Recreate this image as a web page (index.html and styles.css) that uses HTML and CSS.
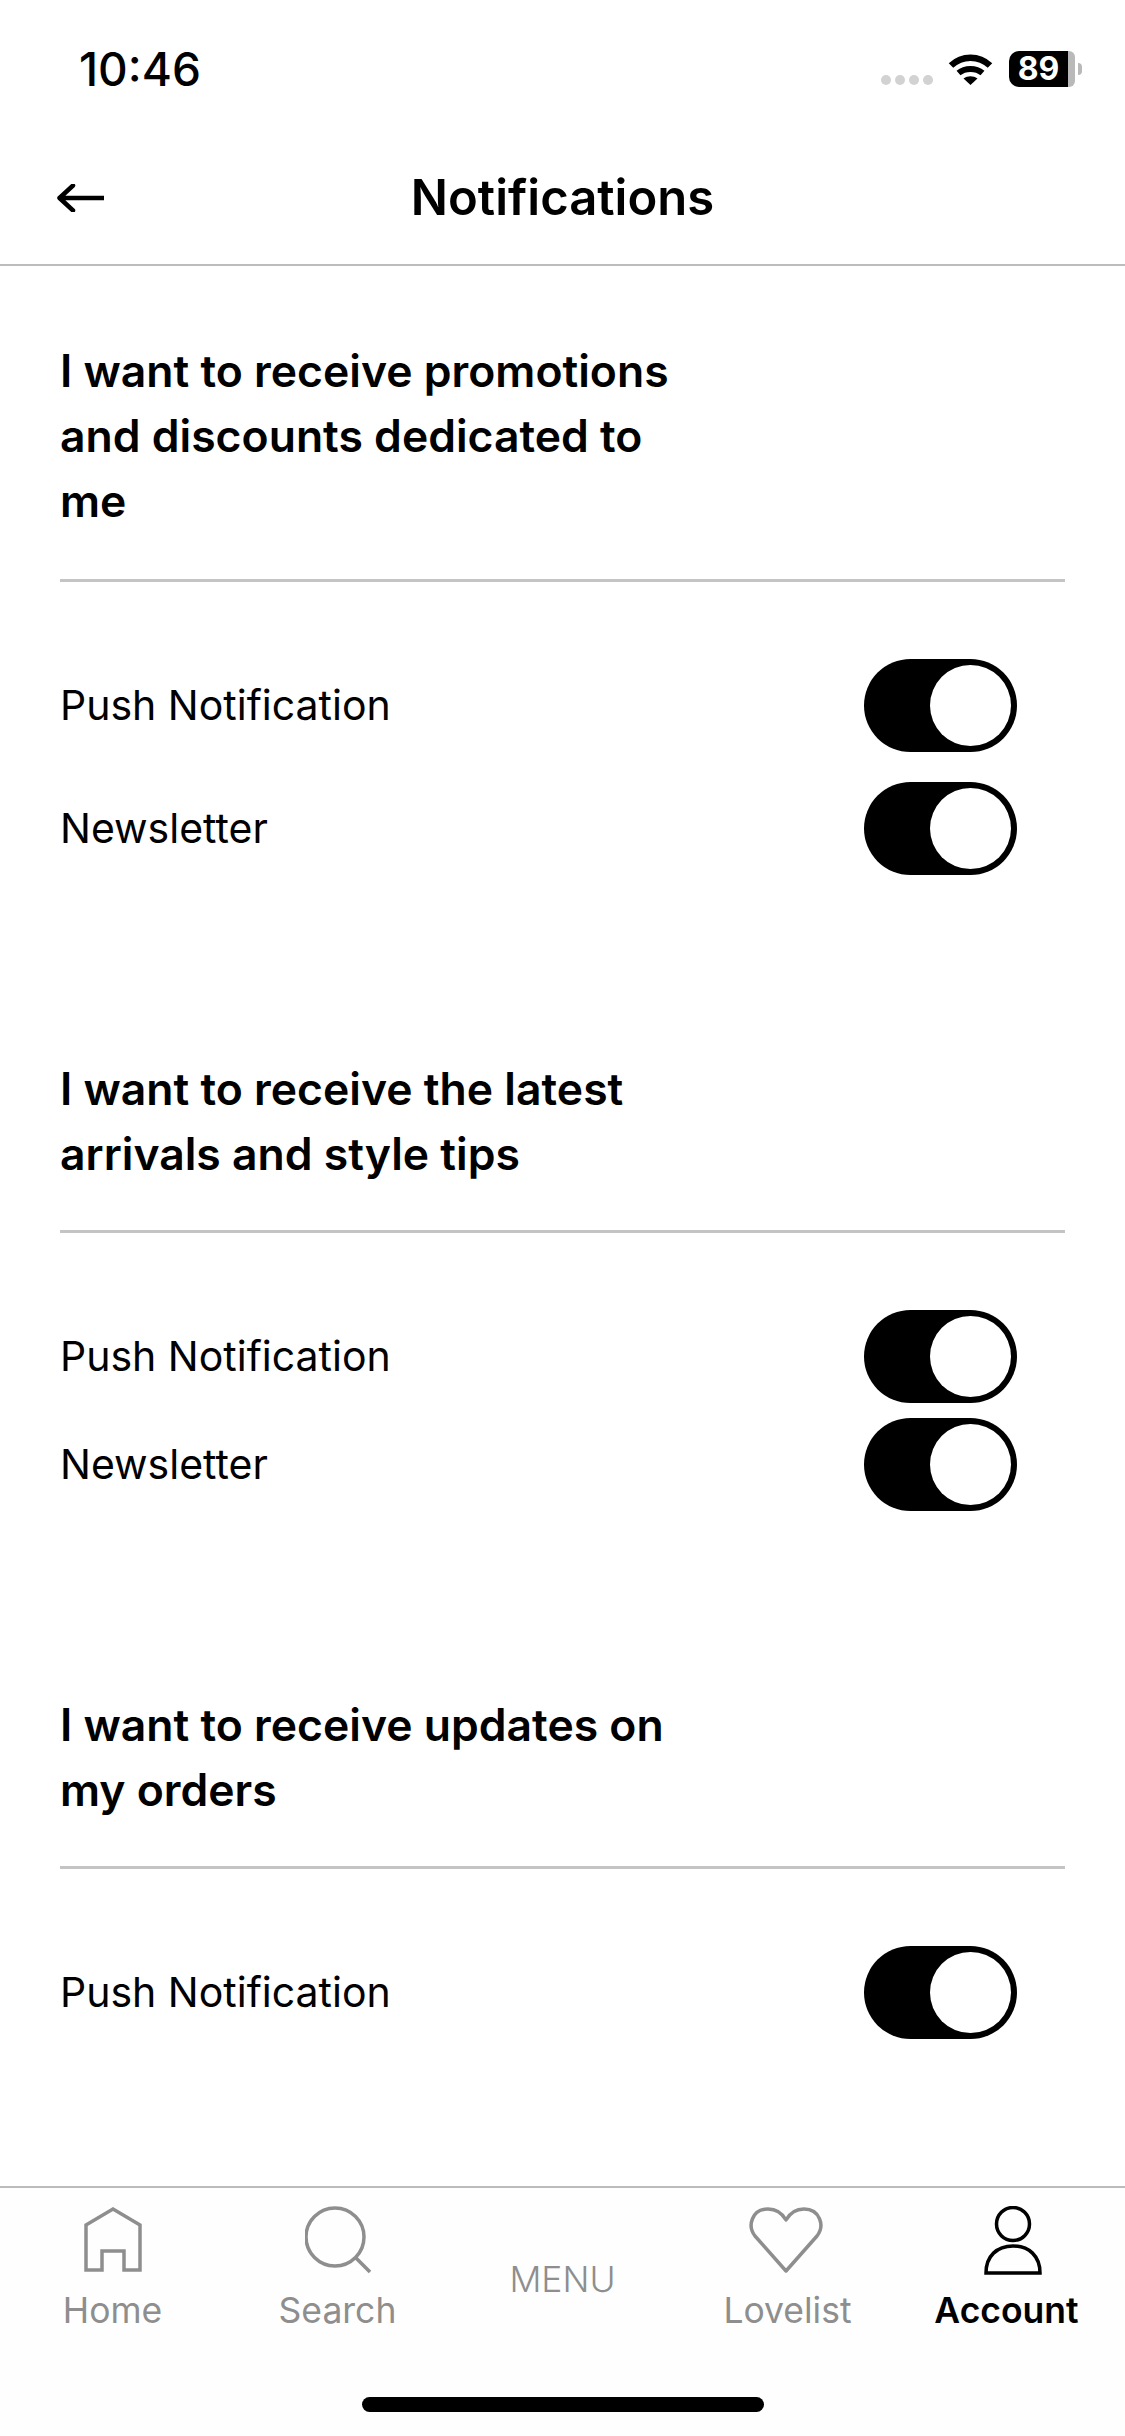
FILE: index.html
```html
<!DOCTYPE html>
<html>
<head>
  <title>Notifications</title>
  <link rel="stylesheet" href="styles.css">
</head>
<body>
  <div class="status-bar">
    <span class="status-time">10:46</span>
    <div class="status-icons">
      <div class="signal-dots"><i></i><i></i><i></i><i></i></div>
      <svg class="wifi-icon" viewBox="0 0 45 33" xmlns="http://www.w3.org/2000/svg">
        <path d="M3 13.5C14 3 31 3 42 13.5" fill="none" stroke="#000" stroke-width="6.5"/>
        <path d="M10.5 21C17 15.5 28 15.5 34.5 21" fill="none" stroke="#000" stroke-width="6"/>
        <path d="M15.5 26.5C20 23.5 25 23.5 29.5 26.5L22.5 33Z" fill="#000"/>
      </svg>
      <div class="battery">
        <div class="battery-body"><span class="battery-level">89</span></div>
        <div class="battery-rest"></div>
        <div class="battery-nub"></div>
      </div>
    </div>
  </div>

  <header class="page-header">
    <svg class="back-icon" viewBox="0 0 47 28" xmlns="http://www.w3.org/2000/svg">
      <path d="M47 14H3M16 1.500L2.500 14 16 26.500" fill="none" stroke="#000" stroke-width="4.500" stroke-linecap="round" stroke-linejoin="round"/>
    </svg>
    <h1 class="page-title">Notifications</h1>
  </header>

  <main class="content">
    <section class="group">
      <h2 class="group-title">I want to receive promotions and discounts dedicated to me</h2>
      <div class="option-list option-list--wide">
        <div class="option">
          <span class="option-label">Push Notification</span>
          <span class="toggle"><span class="toggle-knob"></span></span>
        </div>
        <div class="option">
          <span class="option-label">Newsletter</span>
          <span class="toggle"><span class="toggle-knob"></span></span>
        </div>
      </div>
    </section>

    <section class="group">
      <h2 class="group-title">I want to receive the latest arrivals and style tips</h2>
      <div class="option-list">
        <div class="option">
          <span class="option-label">Push Notification</span>
          <span class="toggle"><span class="toggle-knob"></span></span>
        </div>
        <div class="option">
          <span class="option-label">Newsletter</span>
          <span class="toggle"><span class="toggle-knob"></span></span>
        </div>
      </div>
    </section>

    <section class="group">
      <h2 class="group-title">I want to receive updates on my orders</h2>
      <div class="option-list">
        <div class="option">
          <span class="option-label">Push Notification</span>
          <span class="toggle"><span class="toggle-knob"></span></span>
        </div>
      </div>
    </section>
  </main>

  <nav class="tab-bar">
    <div class="tabs">
      <a class="tab">
        <svg class="tab-icon" width="58" height="68" viewBox="0 0 58 68" xmlns="http://www.w3.org/2000/svg">
          <path d="M2 64V19L29 3 56 19V64H40V45H18V64Z" fill="none" stroke="#8e8e8e" stroke-width="3.500"/>
        </svg>
        <span class="tab-label">Home</span>
      </a>
      <a class="tab">
        <svg class="tab-icon" width="66" height="68" viewBox="0 0 66 68" xmlns="http://www.w3.org/2000/svg">
          <circle cx="30" cy="31" r="29" fill="none" stroke="#8e8e8e" stroke-width="3.500"/>
          <path d="M51 52L65 66" fill="none" stroke="#8e8e8e" stroke-width="3.500"/>
        </svg>
        <span class="tab-label">Search</span>
      </a>
      <a class="tab tab--text">
        <span class="tab-menu">MENU</span>
      </a>
      <a class="tab">
        <svg class="tab-icon tab-icon--heart" width="74" height="68" viewBox="0 0 74 68" xmlns="http://www.w3.org/2000/svg">
          <path d="M37 65L6 30C-2 20 3 3 19 3C28 3 33 7 37 14C41 7 46 3 55 3C71 3 76 20 68 30Z" fill="none" stroke="#8e8e8e" stroke-width="3.500" stroke-linejoin="round"/>
        </svg>
        <span class="tab-label">Lovelist</span>
      </a>
      <a class="tab tab--active">
        <svg class="tab-icon" width="58" height="70" viewBox="0 0 58 70" xmlns="http://www.w3.org/2000/svg">
          <ellipse cx="29" cy="18" rx="16.500" ry="16.500" fill="none" stroke="#000" stroke-width="3.500"/>
          <path d="M2 67C2 50 13 40 29 40C45 40 56 50 56 67Z" fill="none" stroke="#000" stroke-width="3.500"/>
        </svg>
        <span class="tab-label">Account</span>
      </a>
    </div>
    <div class="home-indicator"></div>
  </nav>
</body>
</html>
```

FILE: styles.css
```css
html,
body {
  margin: 0;
  padding: 0;
}

body {
  width: 1125px;
  height: 2436px;
  display: flex;
  flex-direction: column;
  overflow: hidden;
  background-color: #ffffff;
  color: #000000;
  font-family: Inter, "Liberation Sans", sans-serif;
}

/* status bar */
.status-bar {
  height: 132px;
  box-sizing: border-box;
  padding: 46px 43px 0 79px;
  display: flex;
  justify-content: space-between;
  align-items: flex-start;
}

.status-time {
  font-size: 46px;
  font-weight: 500;
  line-height: 46px;
}

.status-icons {
  display: flex;
  align-items: flex-start;
  padding-top: 5px;
}

.signal-dots {
  display: flex;
  gap: 4px;
  margin-top: 24px;
}

.signal-dots i {
  width: 10px;
  height: 10px;
  border-radius: 5px;
  background-color: #d2d2d2;
}

.wifi-icon {
  width: 45px;
  height: 33px;
  margin: 1px 16px 0 15px;
}

.battery {
  display: flex;
  align-items: center;
}

.battery-body {
  width: 59px;
  height: 36px;
  border-radius: 10px 0 0 10px;
  background-color: #000000;
  display: flex;
  align-items: center;
  justify-content: center;
}

.battery-level {
  color: #ffffff;
  font-size: 32px;
  font-weight: 700;
  line-height: 36px;
}

.battery-rest {
  width: 7px;
  height: 36px;
  border-radius: 0 6px 6px 0;
  background-color: #b9b9b9;
}

.battery-nub {
  width: 4px;
  height: 12px;
  margin-left: 3px;
  border-radius: 0 4px 4px 0;
  background-color: #b9b9b9;
}

/* page header */
.page-header {
  height: 134px;
  box-sizing: border-box;
  display: grid;
  grid-template-columns: 1fr auto 1fr;
  align-items: center;
  padding: 0 57px 0 57px;
  border-bottom: 2px solid #bcbcbc;
}

.back-icon {
  width: 47px;
  height: 28px;
}

.page-title {
  margin: 0;
  font-size: 49px;
  font-weight: 600;
  line-height: 60px;
}

/* notification groups */
.content {
  flex: 1;
  padding: 73px 60px 0;
  display: flex;
  flex-direction: column;
  gap: 182px;
}

.group-title {
  margin: 0;
  padding: 0 385px 43px 0;
  border-bottom: 3px solid #c4c4c4;
  font-size: 44.5px;
  font-weight: 600;
  line-height: 65px;
}

.group:first-child .group-title {
  padding-bottom: 45px;
}

.option-list {
  padding-top: 77px;
  display: flex;
  flex-direction: column;
  gap: 15px;
}

.option-list--wide {
  gap: 30px;
}

.option {
  display: flex;
  justify-content: space-between;
  align-items: center;
  padding-right: 48px;
}

.option-label {
  padding-bottom: 2px;
  font-size: 41px;
  font-weight: 400;
}

.toggle {
  width: 153px;
  height: 93px;
  box-sizing: border-box;
  padding: 6px;
  border-radius: 47px;
  background-color: #000000;
  display: flex;
  justify-content: flex-end;
}

.toggle-knob {
  width: 81px;
  height: 81px;
  border-radius: 50%;
  background-color: #ffffff;
}

/* bottom tabs */
.tab-bar {
  height: 250px;
  box-sizing: border-box;
  border-top: 2px solid #bcbcbc;
  background-color: #fefefe;
}

.tabs {
  display: grid;
  grid-template-columns: repeat(5, 225px);
  padding-top: 18px;
  height: 130px;
}

.tab {
  display: flex;
  flex-direction: column;
  align-items: center;
  color: #8e8e8e;
}

.tab--text {
  justify-content: center;
  padding-top: 18px;
}

.tab--active {
  color: #000000;
}

.tab-icon {
  display: block;
}

.tab-icon--heart {
  margin-right: 3px;
}

.tab-label {
  margin-top: 16px;
  font-size: 35.5px;
  font-weight: 400;
  line-height: 42px;
}

.tab--active .tab-icon {
  margin-bottom: -2px;
}

.tab--active .tab-label {
  font-weight: 600;
  margin-right: 12px;
}

.tab-menu {
  font-size: 35.5px;
  font-weight: 300;
  line-height: 42px;
}

.home-indicator {
  width: 402px;
  height: 15px;
  margin: 61px auto 0;
  border-radius: 8px;
  background-color: #000000;
}
```
